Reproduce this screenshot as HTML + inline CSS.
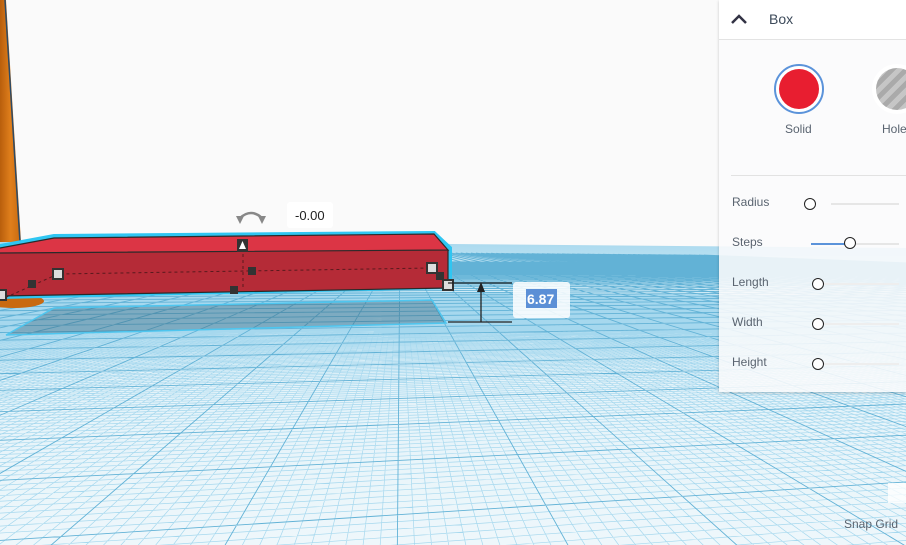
<!DOCTYPE html>
<html><head><meta charset="utf-8"><style>
*{margin:0;padding:0;box-sizing:border-box}
html,body{width:906px;height:545px;overflow:hidden}
body{background:#fafafa;font-family:"Liberation Sans",sans-serif;position:relative}
svg{position:absolute;left:0;top:0}
.panel{position:absolute;left:719px;top:0;width:187px;height:392px;background:rgba(250,251,252,0.88);box-shadow:0 1px 3px rgba(0,0,0,0.2);overflow:hidden}
.hdr{height:40px;background:#fff;border-bottom:1px solid #e3e3e3;position:relative}
.hdr span{position:absolute;left:50px;top:11px;font-size:14px;color:#3c4a5a}
.lbl{position:absolute;left:13px;font-size:12px;color:#5a6470}
.trk{position:absolute;height:2px;background:#e6e6e6}
.knob{position:absolute;width:12px;height:12px;border:1.5px solid #222;border-radius:50%;background:#fff}
</style></head><body>
<svg id="g" width="906" height="545"></svg>
<svg width="906" height="545">
<defs><linearGradient id="og" x1="0" y1="0" x2="1" y2="0"><stop offset="0" stop-color="#b85e0c"/><stop offset="0.5" stop-color="#e07f1c"/><stop offset="1" stop-color="#c96a10"/></linearGradient></defs>
<polygon points="0,0 6,0 21,242 0,242" fill="url(#og)"/>
<line x1="5" y1="0" x2="20" y2="242" stroke="#2c4a66" stroke-width="1.5"/>
<ellipse cx="14" cy="301" rx="30" ry="7" fill="#c96a10"/>
<polygon points="6,335 54,308 432,300 446,323" fill="rgba(50,90,110,0.35)" stroke="#4ec6ef" stroke-width="1.5"/>
<polygon points="0,246 54,236 434,233 450,248 450,287 0,297" fill="none" stroke="#2fc6f2" stroke-width="4"/>
<polygon points="0,248 54,238 434,234 448,250 0,253" fill="#dc3545"/>
<polygon points="0,253 448,250 448,288 0,296" fill="#b52b37"/>
<polyline points="0,248 54,238 434,234 448,250 0,253" fill="none" stroke="#2a2a2a" stroke-width="1.2"/>
<polyline points="0,296 448,288 448,250" fill="none" stroke="#2a2a2a" stroke-width="1.2"/>
<polyline points="0,300 58,274 432,268" fill="none" stroke="#5a1a1e" stroke-width="1" stroke-dasharray="3,3"/>
<line x1="243" y1="248" x2="243" y2="290" stroke="#5a1a1e" stroke-dasharray="3,3"/>
<g fill="#333"><rect x="28" y="280" width="8" height="8"/><rect x="248" y="267" width="8" height="8"/><rect x="230" y="286" width="8" height="8"/><rect x="436" y="272" width="8" height="8"/></g>
<g fill="#ddd" stroke="#333" stroke-width="2"><rect x="-4" y="290" width="10" height="10"/><rect x="53" y="269" width="10" height="10"/><rect x="427" y="263" width="10" height="10"/><rect x="443" y="280" width="10" height="10"/></g>
<rect x="237" y="239" width="11" height="13" fill="#333"/><path d="M239,249 L242.5,241 L246,249" fill="#fff"/>
<path d="M240,218 Q251,208 262,218" fill="none" stroke="#888" stroke-width="2.5"/><path d="M236,216 L240,224 L244,216Z M258,216 L262,224 L266,216Z" fill="#888"/>
<rect x="287" y="202" width="46" height="26" rx="3" fill="#fff"/>
<text x="295" y="220" font-size="13" fill="#222" font-family="Liberation Sans">-0.00</text>
<line x1="448" y1="283" x2="512" y2="283" stroke="#222" stroke-width="1.3"/>
<line x1="448" y1="322" x2="512" y2="322" stroke="#222" stroke-width="1.3"/>
<line x1="481" y1="322" x2="481" y2="290" stroke="#222" stroke-width="1.3"/>
<path d="M477,292 L481,282 L485,292Z" fill="#222"/>
<rect x="513" y="282" width="57" height="36" rx="3" fill="rgba(255,255,255,0.85)"/>
<rect x="526" y="289" width="31" height="19" fill="#5b8fd6"/>
<text x="527" y="304" font-size="14" font-weight="bold" fill="#fff" font-family="Liberation Sans">6.87</text>
<rect x="888" y="483" width="20" height="20" fill="rgba(255,255,255,0.8)"/>
<text x="844" y="528" font-size="12" fill="#5a6470" font-family="Liberation Sans">Snap Grid</text>
</svg>
<div class="panel">
<div class="hdr"><svg width="20" height="20" style="left:10px;top:10px"><path d="M3,13 L10,6 L17,13" fill="none" stroke="#334" stroke-width="2.5"/></svg><span>Box</span></div>
<div style="position:absolute;left:55px;top:64px;width:50px;height:50px;border-radius:50%;border:2px solid #5b93da;background:#fff"></div>
<div style="position:absolute;left:60px;top:69px;width:40px;height:40px;border-radius:50%;background:#e81e30"></div>
<div style="position:absolute;left:153px;top:64px;width:50px;height:50px;border-radius:50%;background:#fff"></div>
<div style="position:absolute;left:157px;top:68px;width:42px;height:42px;border-radius:50%;background:repeating-linear-gradient(135deg,#aaa 0 5px,#c6c6c6 5px 10px)"></div>
<div class="lbl" style="left:66px;top:122px">Solid</div>
<div class="lbl" style="left:163px;top:122px">Hole</div>
<div style="position:absolute;left:12px;top:175px;width:180px;height:1px;background:#e2e2e2"></div>
<div class="lbl" style="top:195px">Radius</div><div class="trk" style="left:112px;top:203px;width:68px"></div><div class="knob" style="left:85px;top:198px"></div>
<div class="lbl" style="top:235px">Steps</div><div class="trk" style="left:92px;top:243px;width:88px"></div><div style="position:absolute;left:92px;top:243px;width:36px;height:2px;background:#5b93da"></div><div class="knob" style="left:125px;top:237px"></div>
<div class="lbl" style="top:275px">Length</div><div class="trk" style="left:104px;top:283px;width:76px;background:#eee"></div><div class="knob" style="left:93px;top:278px"></div>
<div class="lbl" style="top:315px">Width</div><div class="trk" style="left:104px;top:323px;width:76px;background:#eee"></div><div class="knob" style="left:93px;top:318px"></div>
<div class="lbl" style="top:355px">Height</div><div class="trk" style="left:104px;top:363px;width:76px;background:#eee"></div><div class="knob" style="left:93px;top:358px"></div>
</div>
<script>
(function(){
var s=document.getElementById("g");
var cx=500,f=600,hy=244,K=10700,th=Math.atan(1/6),c=Math.cos(th),sn=Math.sin(th);
var h='<defs><linearGradient id="lg" x1="0" y1="0" x2="0" y2="1"><stop offset="0" stop-color="#a8d8ee"/><stop offset="0.12" stop-color="#cbe9f5"/><stop offset="0.4" stop-color="#e2f2f9"/><stop offset="1" stop-color="#eef7fb"/></linearGradient></defs>';
h+='<polygon points="0,240 906,248 906,545 0,545" fill="url(#lg)"/>';
function proj(X,Z){return [cx+f*X/Z,hy+K/Z];}
function seg(P0,d,zmin,zmax){
 var t1,t2;
 if(Math.abs(d[1])<1e-9){if(P0[1]<zmin||P0[1]>zmax)return null;t1=-3000;t2=3000;}
 else{t1=(zmin-P0[1])/d[1];t2=(zmax-P0[1])/d[1];}
 var a=proj(P0[0]+t1*d[0],P0[1]+t1*d[1]),b=proj(P0[0]+t2*d[0],P0[1]+t2*d[1]);
 return 'M'+a[0].toFixed(1)+','+a[1].toFixed(1)+' L'+b[0].toFixed(1)+','+b[1].toFixed(1);
}
var minor='',major='';
var dA=[c,sn],dB=[-sn,c];
for(var k=-600;k<=600;k++){
 var maj=(k%10===0);var zmax=maj?1200:220;
 var r=seg([dB[0]*k,dB[1]*k],dA,12,zmax);
 if(r){if(maj)major+=r;else minor+=r;}
 r=seg([dA[0]*k,dA[1]*k],dB,12,zmax);
 if(r){if(maj)major+=r;else minor+=r;}
}
h+='<g transform="rotate(0.5 450 244)"><path d="'+minor+'" stroke="#a6d8ee" stroke-width="0.7" fill="none"/><path d="'+major+'" stroke="#62b2d6" stroke-width="0.9" fill="none"/></g>';
h+='<polygon points="0,0 906,0 906,247 0,239" fill="#fafafa"/>';
s.innerHTML=h;
})();
</script>
</body></html>
